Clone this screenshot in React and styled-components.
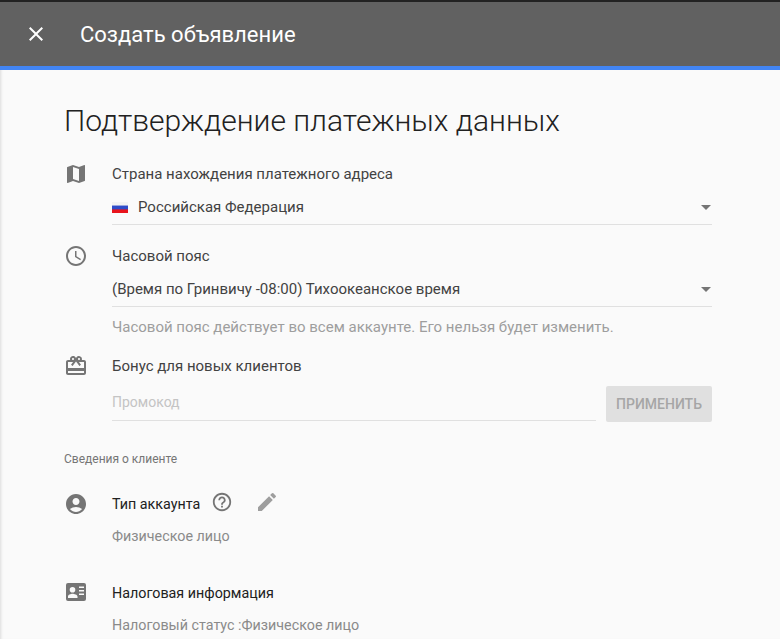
import React from 'react'
import styled, {createGlobalStyle} from 'styled-components'
import {
  MdClose,
  MdMap,
  MdAccessTime,
  MdRedeem,
  MdAccountCircle,
  MdHelpOutline,
  MdEdit,
  MdArrowDropDown
} from 'react-icons/md'

const GlobalStyle = createGlobalStyle`
  html, body {
    margin: 0;
    padding: 0;
    height: 100%;
    overflow: hidden;
    background: #fafafa;
    font-family: Roboto, "Liberation Sans", sans-serif;
  }
`

const Page = styled.div`
  width: 780px;
  height: 639px;
  overflow: hidden;
  background: #fafafa;
  box-shadow: inset 3px 0 3px -2px rgba(0, 0, 0, 0.12);
`

const Header = styled.header`
  display: flex;
  align-items: center;
  height: 64px;
  background: #616161;
  border-top: 2px solid #222222;
  border-bottom: 4px solid #4285f4;
  color: #ffffff;
`

const CloseButton = styled.div`
  display: flex;
  justify-content: center;
  width: 24px;
  margin: 0 32px 0 24px;
  font-size: 24px;
`

const HeaderTitle = styled.h1`
  margin: 0;
  padding-top: 2px;
  font-size: 22px;
  font-weight: 400;
  line-height: 62px;
`

const Content = styled.main`
  padding: 31px 68px 0 64px;
`

const PageTitle = styled.h2`
  margin: 0 0 21px;
  font-size: 30px;
  font-weight: 300;
  line-height: 40px;
  color: #212121;
`

const Row = styled.section`
  display: flex;
  margin-bottom: ${p => p.$gap || 0}px;
`

const IconCell = styled.div`
  flex: none;
  width: 48px;
  height: 24px;
  font-size: 24px;
  color: #757575;
  svg { display: block; }
`

const Body = styled.div`
  flex: 1;
  min-width: 0;
`

const Label = styled.div`
  display: flex;
  align-items: center;
  height: 24px;
  font-size: ${p => p.$dark ? 14.3 : 15}px;
  color: ${p => p.$dark ? '#212121' : '#424242'};
`

const Select = styled.div`
  display: flex;
  align-items: center;
  height: 30px;
  margin-top: 6px;
  padding-bottom: 2px;
  border-bottom: 1px solid #e0e0e0;
  font-size: 15px;
  color: #424242;
`

const SelectText = styled.span`
  flex: 1;
`

const Caret = styled(MdArrowDropDown)`
  font-size: 24px;
  color: #757575;
  margin-right: -6px;
`

const Flag = styled.span`
  width: 16px;
  height: 11px;
  margin-right: 10px;
  background: linear-gradient(#f2f2f2 0 25%, #2d4bc8 40% 62%, #e8141c 72%);
`

const Hint = styled.div`
  margin-top: 10px;
  font-size: 15px;
  line-height: 20px;
  color: #9e9e9e;
`

const PromoRow = styled.div`
  display: flex;
  align-items: flex-start;
  gap: 10px;
  margin-top: 8px;
`

const PromoInput = styled.div`
  flex: 1;
  height: 34px;
  line-height: 32px;
  font-size: 14px;
  color: #c4c4c4;
  border-bottom: 1px solid #e0e0e0;
`

const ApplyButton = styled.div`
  flex: none;
  width: 106px;
  height: 36px;
  line-height: 36px;
  text-align: center;
  background: #e0e0e0;
  border-radius: 2px;
  font-size: 14px;
  font-weight: 500;
  color: #a6a6a6;
`

const SectionTitle = styled.div`
  margin: 27px 0 23px;
  font-size: 12px;
  line-height: 20px;
  color: #757575;
`

const HelpIcon = styled(MdHelpOutline)`
  margin: 0 0 4px 11px;
  font-size: 22px;
  color: #757575;
`

const EditIcon = styled(MdEdit)`
  margin: 0 0 4px 22px;
  font-size: 24px;
  color: #9e9e9e;
`

const Value = styled.div`
  margin-top: 10px;
  font-size: 14.3px;
  line-height: 20px;
  color: #8a8a8a;
`

const TaxIcon = () => (
  <svg width="24" height="24" viewBox="0 0 24 24" fill="currentColor">
    <path d="M4 2h16a2 2 0 0 1 2 2v14a2 2 0 0 1-2 2H4a2 2 0 0 1-2-2V4a2 2 0 0 1 2-2zm4.500 4a2.800 2.800 0 1 0 0 5.600 2.800 2.800 0 0 0 0-5.600zM4 15.600V17h9.500v-1.400c0-1.800-3.300-2.800-5-2.800S4 13.800 4 15.600zM15 5.500V7h5V5.500h-5zm0 3.500v1.500h5V9h-5zm0 3.500V14h5v-1.500h-5z" fillRule="evenodd"/>
  </svg>
)

const App = () => {
  return (
    <Page>
      <GlobalStyle />
      <Header>
        <CloseButton><MdClose /></CloseButton>
        <HeaderTitle>Создать объявление</HeaderTitle>
      </Header>
      <Content>
        <PageTitle>Подтверждение платежных данных</PageTitle>

        <Row $gap={19}>
          <IconCell><MdMap /></IconCell>
          <Body>
            <Label>Страна нахождения платежного адреса</Label>
            <Select>
              <Flag />
              <SelectText>Российская Федерация</SelectText>
              <Caret />
            </Select>
          </Body>
        </Row>

        <Row $gap={17}>
          <IconCell><MdAccessTime /></IconCell>
          <Body>
            <Label>Часовой пояс</Label>
            <Select>
              <SelectText>(Время по Гринвичу -08:00) Тихоокеанское время</SelectText>
              <Caret />
            </Select>
            <Hint>Часовой пояс действует во всем аккаунте. Его нельзя будет изменить.</Hint>
          </Body>
        </Row>

        <Row>
          <IconCell><MdRedeem /></IconCell>
          <Body>
            <Label>Бонус для новых клиентов</Label>
            <PromoRow>
              <PromoInput>Промокод</PromoInput>
              <ApplyButton>ПРИМЕНИТЬ</ApplyButton>
            </PromoRow>
          </Body>
        </Row>

        <SectionTitle>Сведения о клиенте</SectionTitle>

        <Row $gap={35}>
          <IconCell><MdAccountCircle /></IconCell>
          <Body>
            <Label $dark>
              Тип аккаунта
              <HelpIcon />
              <EditIcon />
            </Label>
            <Value>Физическое лицо</Value>
          </Body>
        </Row>

        <Row>
          <IconCell><TaxIcon /></IconCell>
          <Body>
            <Label $dark>Налоговая информация</Label>
            <Value>Налоговый статус :Физическое лицо</Value>
          </Body>
        </Row>
      </Content>
    </Page>
  )
}

export default App
